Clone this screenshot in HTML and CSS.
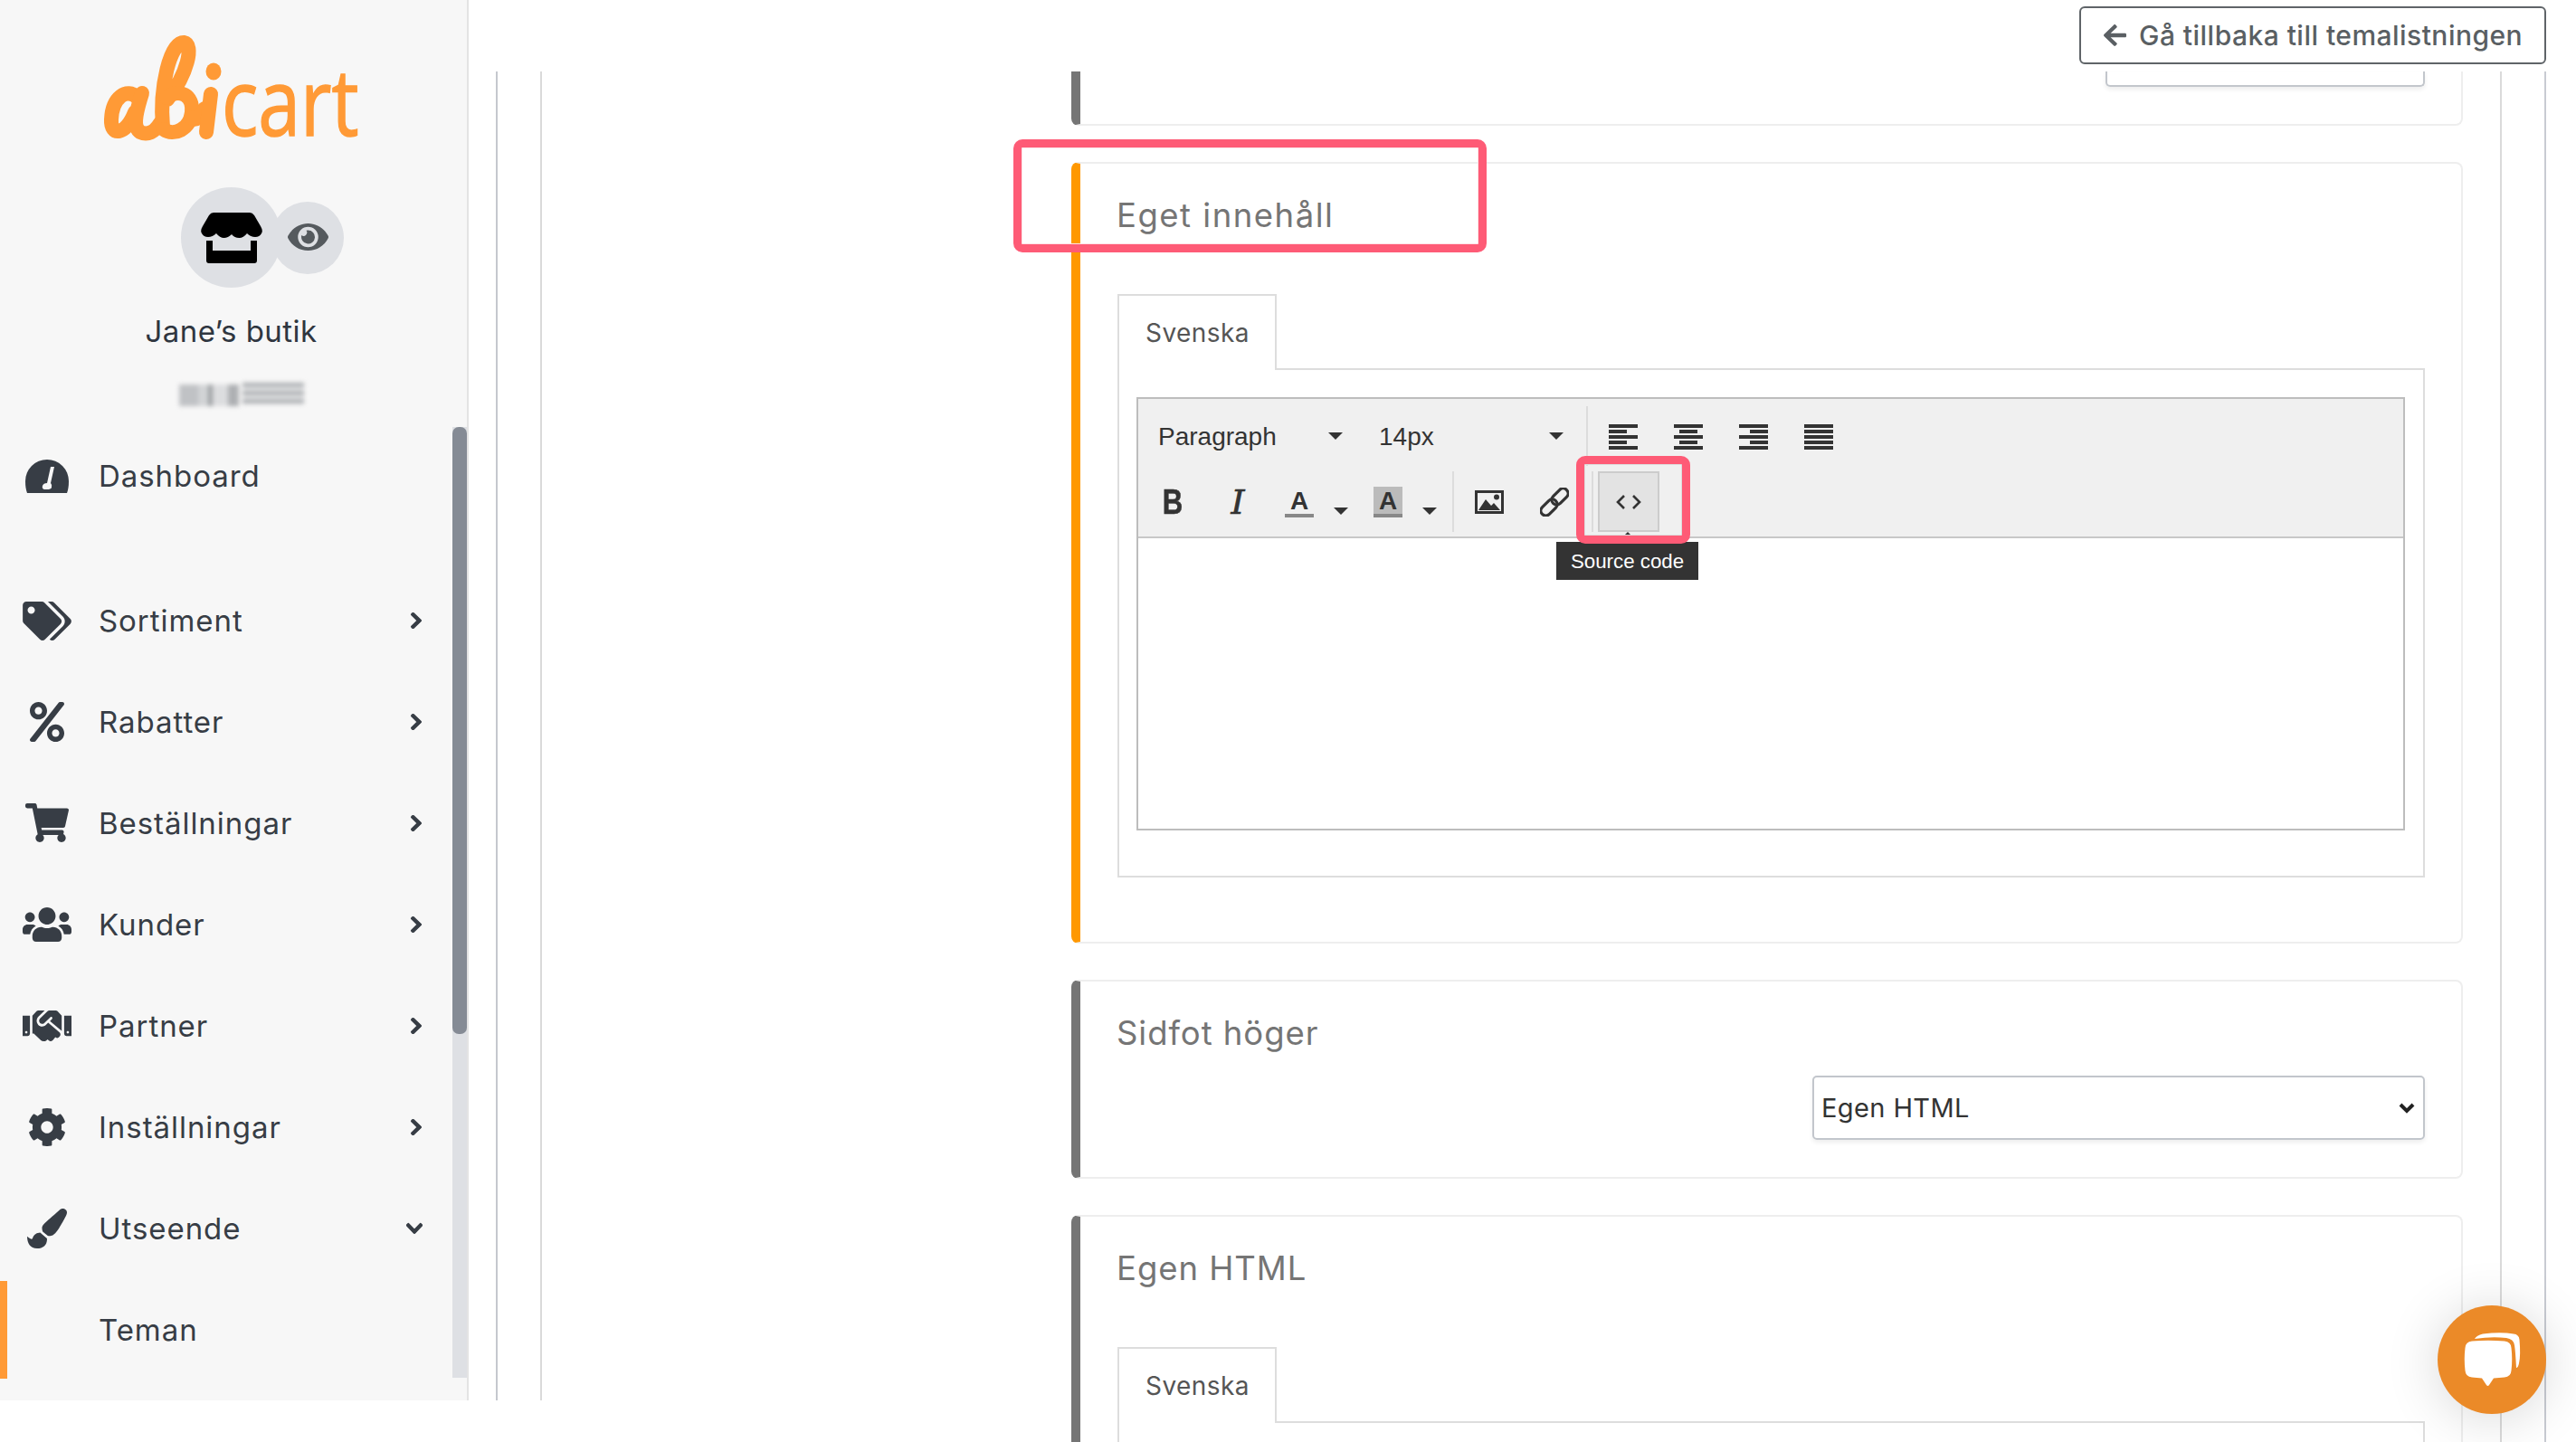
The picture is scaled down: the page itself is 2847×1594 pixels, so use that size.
FILE: index.html
```html
<!DOCTYPE html>
<html lang="sv">
<head>
<meta charset="utf-8">
<title>Abicart</title>
<link rel="stylesheet" href="styles.css">
</head>
<body>
<div class="app">
  <aside class="sidebar">
    <div class="logo">
      <svg viewBox="115 39 130 114" width="130" height="114" role="img" aria-label="abi">
        <g class="logo-script">
          <path d="M152 108C140 96 124 108 123 132C122 151 139 150 149 124"/>
          <path d="M157 103C151 122 146 140 155 146C163 150 171 146 177 136"/>
          <path d="M180 141C176 96 188 47 203 47C215 49 207 82 185 110"/>
          <path d="M184 108C198 97 214 105 212 124C210 143 192 151 181 143"/>
          <path d="M211 130C217 134 222 130 226 120"/>
          <path d="M233 104L228 146"/>
        </g>
        <ellipse cx="236" cy="79" rx="8.500" ry="9.500" class="logo-dot"/>
      </svg>
      <span class="logo-cart">cart</span>
    </div>
    <div class="avatars">
      <span class="avatar">
        <svg width="68" height="56" viewBox="0 0 68 56"><path d="M14 0H54Q57 0 59 3L66 15Q69 20 67 23Q65 27 60 27Q55 27 51 23Q47 28 42.500 28Q37 28 34 24Q30 28 25.500 28Q21 28 17 23Q13 27 8 27Q3 27 1 23Q-1 20 2 15L9 3Q11 0 14 0Z"/><path d="M6 31H13V42H55V31H62V53Q62 56 59 56H9Q6 56 6 53Z"/></svg>
      </span>
      <span class="avatar-eye">
        <svg width="45" height="30" viewBox="0 64 576 384" preserveAspectRatio="none"><path d="M572.52 241.4C518.29 135.59 410.93 64 288 64S57.68 135.64 3.48 241.41a32.35 32.35 0 0 0 0 29.19C57.71 376.41 165.07 448 288 448s230.32-71.64 284.52-177.41a32.35 32.35 0 0 0 0-29.19zM288 400a144 144 0 1 1 144-144 143.93 143.93 0 0 1-144 144zm0-240a95.31 95.31 0 0 0-25.31 3.79 47.85 47.85 0 0 1-66.9 66.9A95.78 95.78 0 1 0 288 160z"/></svg>
      </span>
    </div>
    <div class="shop-name">Jane’s butik</div>
    <div class="smudge"><span class="smudge-a"></span><span class="smudge-b"></span></div>

    <nav class="nav">
      <a class="nav-item nav-first">
        <span class="nav-icon"><svg width="48" height="38" viewBox="0 0 48 38"><path class="ic" d="M2 38Q0 33 0 25A24 24 0 0 1 48 25Q48 33 46 38Z"/><path class="needle" d="M28 9L32 9L28 27Q30 29 29 32Q28 34 24 34H21Q18 33 19 30Q20 27 24 27Z"/></svg></span>
        <span class="nav-label">Dashboard</span>
      </a>
      <a class="nav-item">
        <span class="nav-icon"><svg width="54" height="43" viewBox="0 0 640 512"><path class="ic" d="M497.941 225.941L286.059 14.059A48 48 0 0 0 252.118 0H48C21.49 0 0 21.49 0 48v204.118a48 48 0 0 0 14.059 33.941l211.882 211.882c18.744 18.745 49.136 18.746 67.882 0l204.118-204.118c18.745-18.745 18.745-49.137 0-67.882zM112 160c-26.51 0-48-21.49-48-48s21.49-48 48-48 48 21.49 48 48-21.49 48-48 48zm513.941 133.823L421.823 497.941c-18.745 18.745-49.137 18.745-67.882 0l-.36-.36L527.64 323.522c16.999-16.999 26.36-39.6 26.36-63.64s-9.362-46.641-26.36-63.64L331.397 0h48.721a48 48 0 0 1 33.941 14.059l211.882 211.882c18.745 18.745 18.745 49.137 0 67.882z"/></svg></span>
        <span class="nav-label">Sortiment</span>
        <svg class="chev" width="14" height="20" viewBox="-10 0 340 512" preserveAspectRatio="none"><path class="ic" d="M285.476 272.971L91.132 467.314c-9.373 9.373-24.569 9.373-33.941 0l-22.667-22.667c-9.357-9.357-9.375-24.522-.04-33.901L188.505 256 34.484 101.255c-9.335-9.379-9.317-24.544.04-33.901l22.667-22.667c9.373-9.373 24.569-9.373 33.941 0L285.475 239.03c9.373 9.372 9.373 24.568.001 33.941z"/></svg>
      </a>
      <a class="nav-item">
        <span class="nav-icon"><svg width="38" height="44" viewBox="0 0 448 512" preserveAspectRatio="none"><path class="ic" d="M112 224c61.900 0 112-50.100 112-112S173.900 0 112 0 0 50.100 0 112s50.100 112 112 112zm0-160c26.500 0 48 21.500 48 48s-21.500 48-48 48-48-21.500-48-48 21.500-48 48-48zm224 224c-61.900 0-112 50.100-112 112s50.100 112 112 112 112-50.100 112-112-50.100-112-112-112zm0 160c-26.500 0-48-21.500-48-48s21.500-48 48-48 48 21.500 48 48-21.500 48-48 48zM392.300.2l31.600.1c19.400.1 30.900 21.800 20 37.800L77.400 501.600a23.950 23.950 0 0 1-20 10.400l-33.400-.1c-19.500 0-30.900-21.900-19.700-37.800l368-463.700C377.200 4 384.500.2 392.300.2z"/></svg></span>
        <span class="nav-label">Rabatter</span>
        <svg class="chev" width="14" height="20" viewBox="-10 0 340 512" preserveAspectRatio="none"><path class="ic" d="M285.476 272.971L91.132 467.314c-9.373 9.373-24.569 9.373-33.941 0l-22.667-22.667c-9.357-9.357-9.375-24.522-.04-33.901L188.505 256 34.484 101.255c-9.335-9.379-9.317-24.544.04-33.901l22.667-22.667c9.373-9.373 24.569-9.373 33.941 0L285.475 239.03c9.373 9.372 9.373 24.568.001 33.941z"/></svg>
      </a>
      <a class="nav-item">
        <span class="nav-icon"><svg width="48" height="43" viewBox="0 0 576 512" preserveAspectRatio="none"><path class="ic" d="M528.120 301.319l47.273-208C578.806 78.301 567.391 64 551.990 64H159.208l-9.166-44.810C147.758 8.021 137.930 0 126.529 0H24C10.745 0 0 10.745 0 24v16c0 13.255 10.745 24 24 24h69.883l70.248 343.435C147.325 417.100 136 435.222 136 456c0 30.928 25.072 56 56 56s56-25.072 56-56c0-15.674-6.447-29.835-16.824-40h209.647C430.447 426.165 424 440.326 424 456c0 30.928 25.072 56 56 56s56-25.072 56-56c0-22.172-12.888-41.332-31.579-50.405l5.517-24.276c3.413-15.018-8.002-29.319-23.403-29.319H218.117l-6.545-32h293.145c11.206 0 20.920-7.754 23.403-18.681z"/></svg></span>
        <span class="nav-label">Beställningar</span>
        <svg class="chev" width="14" height="20" viewBox="-10 0 340 512" preserveAspectRatio="none"><path class="ic" d="M285.476 272.971L91.132 467.314c-9.373 9.373-24.569 9.373-33.941 0l-22.667-22.667c-9.357-9.357-9.375-24.522-.04-33.901L188.505 256 34.484 101.255c-9.335-9.379-9.317-24.544.04-33.901l22.667-22.667c9.373-9.373 24.569-9.373 33.941 0L285.475 239.030c9.373 9.372 9.373 24.568.001 33.941z"/></svg>
      </a>
      <a class="nav-item">
        <span class="nav-icon"><svg width="54" height="38" viewBox="0 32 640 448" preserveAspectRatio="none"><path class="ic" d="M96 224c35.300 0 64-28.700 64-64s-28.700-64-64-64-64 28.700-64 64 28.700 64 64 64zm448 0c35.300 0 64-28.700 64-64s-28.700-64-64-64-64 28.700-64 64 28.700 64 64 64zm32 32h-64c-17.600 0-33.500 7.100-45.100 18.600 40.300 22.100 68.900 62 75.100 109.400h66c17.700 0 32-14.300 32-32v-32c0-35.300-28.700-64-64-64zm-256 0c61.900 0 112-50.100 112-112S381.900 32 320 32 208 82.100 208 144s50.100 112 112 112zm76.800 32h-8.300c-20.800 10-43.900 16-68.500 16s-47.600-6-68.500-16h-8.300C179.600 288 128 339.600 128 403.200V432c0 26.500 21.500 48 48 48h288c26.500 0 48-21.500 48-48v-28.800c0-63.600-51.600-115.200-115.200-115.200zm-223.700-13.400C161.500 263.100 145.600 256 128 256H64c-35.300 0-64 28.700-64 64v32c0 17.700 14.300 32 32 32h65.900c6.300-47.400 34.900-87.300 75.200-109.400z"/></svg></span>
        <span class="nav-label">Kunder</span>
        <svg class="chev" width="14" height="20" viewBox="-10 0 340 512" preserveAspectRatio="none"><path class="ic" d="M285.476 272.971L91.132 467.314c-9.373 9.373-24.569 9.373-33.941 0l-22.667-22.667c-9.357-9.357-9.375-24.522-.04-33.901L188.505 256 34.484 101.255c-9.335-9.379-9.317-24.544.04-33.901l22.667-22.667c9.373-9.373 24.569-9.373 33.941 0L285.475 239.030c9.373 9.372 9.373 24.568.001 33.941z"/></svg>
      </a>
      <a class="nav-item">
        <span class="nav-icon"><svg width="54" height="34" viewBox="0 64 640 384" preserveAspectRatio="none"><path class="ic" d="M434.700 64h-85.900c-8 0-15.700 3-21.600 8.400l-98.300 90c-.1.1-.2.3-.3.4-16.600 15.600-16.300 40.500-2.100 56 12.700 13.900 39.400 17.600 56.100 2.700.1-.1.3-.1.4-.2l79.900-73.200c6.500-5.900 16.700-5.500 22.600 1 6 6.500 5.500 16.600-1 22.600l-26.100 23.900L504 313.800c2.900 2.400 5.500 5 7.900 7.700V128l-54.600-54.600c-5.900-6-14.100-9.400-22.600-9.400zM544 128.200v223.900c0 17.700 14.300 32 32 32h64V128.200h-96zm48 223.900c-8.800 0-16-7.200-16-16s7.200-16 16-16 16 7.200 16 16-7.200 16-16 16zM0 384h64c17.700 0 32-14.300 32-32V128.200H0V384zm48-63.900c8.800 0 16 7.200 16 16s-7.200 16-16 16-16-7.200-16-16c0-8.900 7.200-16 16-16zm435.900 18.600L334.600 217.500l-30 27.500c-29.700 27.100-75.200 24.500-101.700-4.400-26.900-29.400-24.800-74.900 4.400-101.700L289.100 64h-83.800c-8.500 0-16.600 3.400-22.600 9.400L128 128v223.900h18.300l90.500 81.900c27.400 22.300 67.700 18.100 90-9.300l.2-.2 17.900 15.500c15.900 13 39.400 10.500 52.300-5.400l31.400-38.600 5.400 4.400c13.700 11.100 33.900 9.100 45-4.700l9.500-11.700c11.200-13.800 9.100-33.900-4.600-45.100z"/></svg></span>
        <span class="nav-label">Partner</span>
        <svg class="chev" width="14" height="20" viewBox="-10 0 340 512" preserveAspectRatio="none"><path class="ic" d="M285.476 272.971L91.132 467.314c-9.373 9.373-24.569 9.373-33.941 0l-22.667-22.667c-9.357-9.357-9.375-24.522-.04-33.901L188.505 256 34.484 101.255c-9.335-9.379-9.317-24.544.04-33.901l22.667-22.667c9.373-9.373 24.569-9.373 33.941 0L285.475 239.03c9.373 9.372 9.373 24.568.001 33.941z"/></svg>
      </a>
      <a class="nav-item">
        <span class="nav-icon"><svg width="40" height="42" viewBox="17 8 478 496" preserveAspectRatio="none"><path class="ic" d="M487.400 315.700l-42.600-24.600c4.300-23.200 4.300-47 0-70.200l42.600-24.600c4.900-2.800 7.100-8.600 5.500-14-11.100-35.600-30-67.800-54.700-94.600-3.800-4.100-10-5.100-14.800-2.300L380.800 110c-17.900-15.400-38.500-27.300-60.800-35.100V25.800c0-5.600-3.900-10.500-9.400-11.700-36.700-8.200-74.300-7.800-109.200 0-5.500 1.200-9.400 6.100-9.400 11.700V75c-22.200 7.900-42.800 19.800-60.800 35.100L88.700 85.500c-4.900-2.800-11-1.900-14.800 2.300-24.700 26.700-43.600 58.900-54.700 94.600-1.700 5.400.6 11.200 5.500 14L67.300 221c-4.300 23.200-4.300 47 0 70.200l-42.600 24.600c-4.900 2.800-7.100 8.600-5.500 14 11.100 35.600 30 67.800 54.700 94.600 3.800 4.100 10 5.100 14.800 2.300l42.600-24.600c17.900 15.400 38.500 27.300 60.800 35.100v49.200c0 5.600 3.900 10.500 9.400 11.700 36.700 8.200 74.300 7.800 109.200 0 5.500-1.200 9.400-6.100 9.400-11.700v-49.200c22.200-7.900 42.800-19.800 60.800-35.100l42.600 24.600c4.900 2.800 11 1.900 14.800-2.300 24.700-26.700 43.600-58.900 54.700-94.600 1.500-5.500-.7-11.300-5.600-14.100zM256 336c-44.100 0-80-35.900-80-80s35.900-80 80-80 80 35.900 80 80-35.900 80-80 80z"/></svg></span>
        <span class="nav-label">Inställningar</span>
        <svg class="chev" width="14" height="20" viewBox="-10 0 340 512" preserveAspectRatio="none"><path class="ic" d="M285.476 272.971L91.132 467.314c-9.373 9.373-24.569 9.373-33.941 0l-22.667-22.667c-9.357-9.357-9.375-24.522-.04-33.901L188.505 256 34.484 101.255c-9.335-9.379-9.317-24.544.04-33.901l22.667-22.667c9.373-9.373 24.569-9.373 33.941 0L285.475 239.030c9.373 9.372 9.373 24.568.001 33.941z"/></svg>
      </a>
      <a class="nav-item">
        <span class="nav-icon"><svg width="44" height="44" viewBox="0 0 512 512"><path class="ic" d="M167.020 309.340c-40.120 2.580-76.530 17.860-97.190 72.300-2.350 6.210-8 9.980-14.590 9.980-11.110 0-45.460-27.670-55.250-34.350C0 439.620 37.930 512 128 512c75.860 0 128-43.770 128-120.190 0-3.110-.65-6.080-.97-9.130l-88.010-73.340zM457.890 0c-15.160 0-29.370 6.710-40.210 16.450C213.270 199.050 192 203.340 192 257.090c0 13.700 3.250 26.760 8.730 38.700l63.820 53.180c7.210 1.800 14.640 3.030 22.390 3.030 62.110 0 98.110-45.470 211.160-256.460 7.380-14.350 13.900-29.850 13.900-45.990C512 20.640 486 0 457.890 0z"/></svg></span>
        <span class="nav-label">Utseende</span>
        <svg class="chev-down" width="20" height="14" viewBox="0 -10 512 340" preserveAspectRatio="none"><path class="ic" d="M239.030 285.476L44.686 91.132c-9.373-9.373-9.373-24.569 0-33.941l22.667-22.667c9.357-9.357 24.522-9.375 33.901-.04L256 188.505 410.745 34.484c9.379-9.335 24.544-9.317 33.901.04l22.667 22.667c9.373 9.373 9.373 24.569 0 33.941L272.970 285.475c-9.372 9.373-24.568 9.373-33.940.001z"/></svg>
      </a>
      <a class="nav-item nav-active">
        <span class="nav-icon"></span>
        <span class="nav-label">Teman</span>
      </a>
    </nav>
    <div class="scroll-track"><div class="scroll-thumb"></div></div>
  </aside>

  <main class="main">
    <div class="outer">
      <div class="inner">
        <section class="card card-partial">
          <div class="select-clip"></div>
        </section>

        <section class="card card-active">
          <h2 class="card-title card-title-wide">Eget innehåll</h2>
          <div class="tab">Svenska</div>
          <div class="tab-box">
            <div class="editor">
              <div class="toolbar">
                <div class="tb-row tb-row-1">
                  <div class="listbox"><span class="listbox-text">Paragraph</span><i class="caret"></i></div>
                  <div class="listbox listbox-size"><span class="listbox-text">14px</span><i class="caret"></i></div>
                  <i class="tb-sep tb-sep-top"></i>
                  <div class="aligns">
                    <span class="align align-left"><b></b><b></b><b></b><b></b><b></b></span>
                    <span class="align align-center"><b></b><b></b><b></b><b></b><b></b></span>
                    <span class="align align-right"><b></b><b></b><b></b><b></b><b></b></span>
                    <span class="align align-full"><b></b><b></b><b></b><b></b><b></b></span>
                  </div>
                </div>
                <div class="tb-row tb-row-2">
                  <span class="tb-btn tb-bold"><span class="tb-bold-glyph">B</span></span>
                  <span class="tb-btn tb-italic">I</span>
                  <span class="tb-color"><span class="tb-letter">A</span></span>
                  <i class="caret caret-low caret-a"></i>
                  <span class="tb-color tb-color-hl"><span class="tb-letter">A</span></span>
                  <i class="caret caret-low caret-a"></i>
                  <i class="tb-sep tb-sep-1"></i>
                  <svg class="tb-img" width="32" height="26" viewBox="0 0 32 26"><path d="M0 0H32V26H0ZM3 3V23H29V3Z"/><path d="M4 22L12 10L18 17L21 14L28 22Z"/><circle cx="24" cy="7.500" r="3"/></svg>
                  <svg class="tb-link" width="32" height="32" viewBox="0 0 32 32"><g transform="rotate(-45 16 16)" fill="none" stroke="#333" stroke-width="3.200"><rect x="-3" y="10.500" width="21" height="11" rx="5.500"/><rect x="14" y="10.500" width="21" height="11" rx="5.500"/></g></svg>
                  <i class="tb-sep tb-sep-2"></i>
                  <span class="tb-code"><svg width="28" height="16" viewBox="0 0 28 16"><path d="M9 1L2 8L9 15M19 1L26 8L19 15" fill="none" stroke="#333" stroke-width="2.600"/></svg></span>
                </div>
              </div>
              <div class="editor-body"></div>
            </div>
          </div>
        </section>

        <section class="card">
          <h2 class="card-title">Sidfot höger</h2>
          <div class="select-row">
            <div class="select"><span>Egen HTML</span><svg width="18" height="12" viewBox="0 0 18 12"><path d="M2 2L9 9L16 2" fill="none" stroke="#222" stroke-width="4"/></svg></div>
          </div>
        </section>

        <section class="card card-last">
          <h2 class="card-title">Egen HTML</h2>
          <div class="tab">Svenska</div>
          <div class="tab-box tab-box-open"></div>
        </section>
      </div>
    </div>
  </main>
</div>

<div class="back-btn"><svg width="25" height="28" viewBox="0 0 448 512" preserveAspectRatio="none"><path d="M257.500 445.100l-22.200 22.200c-9.400 9.400-24.600 9.400-33.900 0L7 273c-9.400-9.400-9.400-24.600 0-33.900L201.400 44.700c9.400-9.400 24.600-9.400 33.900 0l22.200 22.200c9.500 9.500 9.300 25-.4 34.300L136.600 216H424c13.300 0 24 10.700 24 24v32c0 13.300-10.700 24-24 24H136.600l120.500 114.800c9.800 9.300 10 24.800.4 34.300z"/></svg><span>Gå tillbaka till temalistningen</span></div>

<div class="tooltip-arrow"></div>
<div class="tooltip">Source code</div>
<div class="mark mark-title"></div>
<div class="mark mark-code"></div>

<div class="chat">
  <svg width="120" height="120" viewBox="0 0 120 120"><path d="M38 39.500Q56 38 74 39.500Q81 40 81.500 47Q83 59 81.500 72Q81 79 74 79.500L62 80.500L57 88Q55.500 90 54 88L49 80.500L38 79.500Q31 79 30.500 72Q29 59 30.500 47Q31 40 38 39.500Z"/><path d="M41 37Q43 33 50 31.500Q70 29 84 31.500Q90 32 90.500 38Q92 55 90 64Q89 69 87 69Q86 50 85 44Q84 37 76 36Q60 34 41 37Z"/></svg>
</div>
</body>
</html>
```

FILE: styles.css
```css
* { box-sizing: border-box; }
html, body { margin: 0; padding: 0; }
body {
  width: 2847px;
  height: 1594px;
  overflow: hidden;
  position: relative;
  background: #fff;
  font-family: "Inter", "Noto Sans", sans-serif;
  color: #373d45;
}

.app { display: flex; align-items: flex-start; }

/* Sidebar */
.sidebar {
  position: relative;
  flex: 0 0 518px;
  height: 1548px;
  background: #f7f7f7;
  border-right: 2px solid #e4e4e4;
  padding-top: 39px;
  overflow: hidden;
}
.logo { display: flex; align-items: flex-start; height: 114px; margin-left: 115px; }
.logo svg { display: block; flex: 0 0 130px; overflow: visible; }
.logo-script path { fill: none; stroke: #ff9a36; stroke-width: 16; stroke-linecap: round; stroke-linejoin: round; }
.logo-dot { fill: #ff9a36; }
.logo-cart {
  display: block; margin-top: 15px;
  font-family: "Open Sans", sans-serif; font-size: 102px; line-height: 114px; color: #ff9a36;
  -webkit-text-stroke: 1.500px #ff9a36;
  transform: scaleX(.825); transform-origin: left center;
}

.avatars { display: flex; align-items: center; margin: 54px 0 0 200px; }
.avatar {
  width: 111px; height: 111px; border-radius: 50%;
  background: #dee0e4; display: flex; align-items: center; justify-content: center;
}
.avatar svg { fill: #000; }
.avatar-eye {
  width: 80px; height: 80px; border-radius: 50%; margin-left: -11px;
  background: #dee0e4; display: flex; align-items: center; justify-content: center;
}
.avatar-eye svg { fill: #555a5e; margin-top: -2px; }

.shop-name {
  width: 511px; text-align: center; margin-top: 28px;
  font-size: 33px; line-height: 40px; letter-spacing: .45px; color: #2f3640;
}
.smudge { display: flex; gap: 4px; margin: 36px 0 0 198px; height: 28px; filter: blur(2.500px); }
.smudge-a {
  width: 66px; height: 24px; margin-top: 3px;
  background: linear-gradient(90deg, #c0c2c5 0 32%, #d2d4d6 32% 48%, #9ea1a4 48% 56%, #dcdddf 56% 82%, #aeb0b3 82% 100%);
}
.smudge-b {
  width: 68px; height: 24px; margin-top: 1px;
  background: repeating-linear-gradient(#aeb1b4 0 5px, #e8e8e9 5px 9px);
}

.nav { margin-top: 22px; }
.nav-item { display: flex; align-items: center; height: 108px; margin-bottom: 3.950px; padding-right: 49px; }
.nav-first { margin-bottom: 52px; }
.nav-icon { flex: 0 0 104px; display: flex; justify-content: center; }
.nav-label { margin-left: 5px; font-size: 33px; letter-spacing: .95px; color: #373d45; }
.ic { fill: #373d45; }
.chev .ic, .chev-down .ic { stroke: #373d45; stroke-width: 28; stroke-linejoin: round; }
.needle { fill: #f7f7f7; }
.chev { margin-left: auto; }
.chev-down { margin-left: auto; margin-right: -1px; }
.nav-active { box-shadow: inset 8px 0 0 #ff9a36; }

.scroll-track {
  position: absolute; left: 500px; top: 472px; width: 16px; height: 1051px;
  background: #dee0e4;
}
.scroll-thumb { height: 671px; background: #858b95; border-radius: 7px; }

/* Main */
.main { flex: 1; height: 1594px; padding: 79px 33px 0 31px; overflow: hidden; }
.outer {
  position: relative; height: 1515px; padding-left: 48px;
  border-right: 2px solid #c8cbd2;
}
.outer::before {
  content: ""; position: absolute; left: -1px; top: 0; width: 2px; height: 1469px; background: #c5c8ce;
}
.inner {
  position: relative; height: 100%; margin-right: 47px;
  border-right: 2px solid #dadada; padding: 0 41px 0 587px;
}
.inner::before {
  content: ""; position: absolute; left: 0; top: 0; width: 2px; height: 1469px; background: #dadada;
}

/* Cards */
.card {
  position: relative; background: #fff; margin-bottom: 40px;
  border: 2px solid #eeeeee; border-left: 10px solid #757575; border-radius: 8px;
  padding: 27px 40px 41px 41px;
}
.card-partial {
  height: 60px; padding: 0 40px 0 0; border-top: 0;
  border-top-left-radius: 0; border-top-right-radius: 0;
  display: flex; justify-content: flex-end;
}
.select-clip {
  width: 353px; height: 17px; border: 2px solid #c2c6cc; border-top: 0;
  border-radius: 0 0 5px 5px; box-shadow: 0 3px 5px rgba(0, 0, 0, .07);
}
.card-active { border-left-color: #ff9800; height: 864px; }
.card-last { height: 400px; }
.card-title {
  margin: 0 0 0 -1px; font-size: 36.500px; line-height: 60px; font-weight: 400;
  color: #757575; letter-spacing: .95px;
}
.card-title-wide { letter-spacing: 1.500px; }
.tab {
  position: relative; z-index: 1;
  width: 176px; height: 84px; margin: 57px 0 -2px;
  background: #fff; border: 2px solid #ddd; border-bottom: 0;
  padding: 21px 0 0 29px; font-size: 28px; line-height: 40px; color: #555;
  letter-spacing: .45px;
}
.tab-box {
  border: 2px solid #ddd; padding: 30px 20px 50px 19px; height: 563px;
}
.tab-box-open { height: 100px; }

/* Editor */
.editor { height: 479px; border: 2px solid #bdbdbd; display: flex; flex-direction: column; }
.toolbar {
  height: 154px; background: #f0f0f0; border-bottom: 2px solid #c8c8c8;
  font-family: "Liberation Sans", Arial, sans-serif; color: #333;
}
.tb-row { display: flex; align-items: center; }
.tb-row-1 { height: 66px; margin-top: 8px; }
.tb-row-2 { height: 67px; margin-top: 6px; }
.listbox {
  width: 245px; display: flex; align-items: center;
  justify-content: space-between; padding: 0 19px 0 23px; font-size: 28px;
}
.listbox-text { position: relative; top: 1px; margin-left: -1px; }
.listbox-size { width: 244px; padding-left: 22px; }
.caret {
  display: block; width: 0; height: 0;
  border-left: 8px solid transparent; border-right: 8px solid transparent;
  border-top: 8px solid #333;
}
.caret-low { margin-top: 20px; }
.caret-a { margin-left: 22px; }
.tb-sep { display: block; width: 2px; background: #dcdcdc; align-self: stretch; }
.tb-sep-top { margin-left: 6px; }
.aligns { display: flex; gap: 40px; margin-left: 23px; }
.align { display: flex; flex-direction: column; gap: 2px; width: 32px; margin-top: 2px; }
.align b { display: block; height: 4px; width: 32px; background: #333; }
.align-left b:nth-child(even) { width: 20px; }
.align-center { align-items: center; }
.align-center b:nth-child(even) { width: 20px; }
.align-right { align-items: flex-end; }
.align-right b:nth-child(even) { width: 20px; }
.tb-btn { display: block; width: 72px; text-align: center; line-height: 38px; font-size: 39px; }
.tb-bold { margin-left: 2px; font-weight: 700; }
.tb-bold-glyph { display: inline-block; transform: scaleX(.8); -webkit-text-stroke: .5px #333; }
.tb-italic { font-family: "DejaVu Serif", serif; font-style: italic; font-weight: 400; font-size: 38px; -webkit-text-stroke: .7px #333; }
.tb-color {
  position: relative; display: block; width: 32px; height: 34px; margin-left: 16px;
  border-bottom: 4px solid #888; text-align: center;
  font-size: 28px; line-height: 31px; font-weight: 700;
}
.tb-color-hl { background: #bbb; margin-left: 28px; }
.tb-letter { display: block; }
.tb-sep-1 { margin-left: 17px; }
.tb-img { margin-left: 23px; fill: #333; }
.tb-link { margin-left: 40px; }
.tb-sep-2 { margin-left: 25px; }
.tb-code {
  display: flex; align-items: center; justify-content: center;
  width: 68px; align-self: stretch; margin-left: 5px;
  background: #e3e3e3; border: 2px solid #ccc;
}
.editor-body { flex: 1; background: #fff; }

/* Select */
.select-row { display: flex; justify-content: flex-end; margin-top: 17px; }
.select {
  width: 677px; height: 71px; display: flex; align-items: center; justify-content: space-between;
  padding: 0 9px 0 8px; border: 2px solid #c2c6cc; border-radius: 5px;
  box-shadow: 0 3px 5px rgba(0, 0, 0, .07);
  font-size: 29px; letter-spacing: .4px; color: #333;
}

/* Overlays */
.back-btn {
  position: absolute; top: 7px; right: 33px; width: 516px; height: 64px;
  display: flex; align-items: center; gap: 14px; padding-left: 25px;
  background: #fff; border: 2px solid #5f6468; border-radius: 6px;
  font-size: 30px; font-weight: 500; color: #5a5f63; letter-spacing: .47px;
}
.back-btn svg { fill: #5a5f63; }
.tooltip {
  position: absolute; left: 1720px; top: 599px; width: 157px; height: 42px;
  background: #333; color: #fff; text-align: center;
  font-family: "Liberation Sans", Arial, sans-serif; font-size: 22.300px; line-height: 44px;
}
.tooltip-arrow {
  position: absolute; left: 1794px; top: 588px; width: 0; height: 0;
  border-left: 5px solid transparent; border-right: 5px solid transparent; border-bottom: 5px solid #333;
}
.mark { position: absolute; border: 9px solid #fe5b76; border-radius: 10px; }
.mark-title { left: 1120px; top: 154px; width: 523px; height: 125px; box-shadow: inset 0 0 0 1px #fde3e6; }
.mark-code { left: 1742px; top: 504px; width: 126px; height: 97px; box-shadow: inset 0 0 0 1px #dcdcdc; }
.chat {
  position: absolute; left: 2694px; top: 1443px; width: 120px; height: 120px;
  border-radius: 50%; background: #eb8a28; box-shadow: 0 4px 60px rgba(0, 0, 0, .16);
}
.chat svg { display: block; fill: #fff; }
```
